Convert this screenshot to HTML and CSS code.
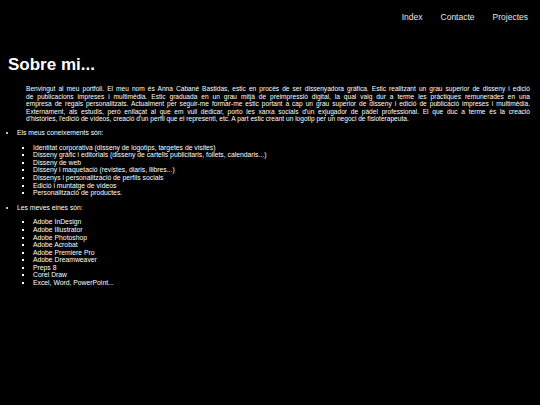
FILE: index.html
```html
<!DOCTYPE html>
<html lang="ca">
<head>
<meta charset="utf-8">
<title>Sobre mi</title>
<link rel="stylesheet" href="styles.css">
</head>
<body>
<nav class="nav">
  <a class="nav-link" href="#">Index</a>
  <a class="nav-link" href="#">Contacte</a>
  <a class="nav-link" href="#">Projectes</a>
</nav>
<main class="content">
  <h1 class="title">Sobre mi...</h1>
  <p class="intro"><span class="line">Benvingut al meu portfoli. El meu nom és Anna Cabané Bastidas, estic en procés de ser dissenyadora gràfica. Estic realitzant un grau superior de disseny i edició</span> <span class="line">de publicacions impreses i multimèdia. Estic graduada en un grau mitjà de preimpressió digital, la qual vaig dur a terme les pràctiques remunerades en una</span> <span class="line">empresa de regals personalitzats. Actualment per seguir-me formar-me estic portant a cap un grau superior de disseny i edició de publicació impreses i multimèdia.</span> <span class="line">Externament, als estudis, però enllaçat al que em vull dedicar, porto les xarxa socials d'un exjugador de pàdel professional. El que duc a terme és la creació</span> <span class="line last">d'històries, l'edició de vídeos, creació d'un perfil que el representi, etc. A part estic creant un logotip per un negoci de fisioterapeuta.</span></p>
  <ul class="outer">
    <li class="outer-item">Els meus coneixements són:
      <ul class="inner">
        <li>Identitat corporativa (disseny de logotips, targetes de visites)</li>
        <li>Disseny gràfic i editorials (disseny de cartells publicitaris, follets, calendaris...)</li>
        <li>Disseny de web</li>
        <li>Disseny i maquetació (revistes, diaris, llibres...)</li>
        <li>Dissenys i personalització de perfils socials</li>
        <li>Edició i muntatge de vídeos</li>
        <li>Personalització de productes.</li>
      </ul>
    </li>
    <li class="outer-item">Les meves eines són:
      <ul class="inner">
        <li>Adobe InDesign</li>
        <li>Adobe Illustrator</li>
        <li>Adobe Photoshop</li>
        <li>Adobe Acrobat</li>
        <li>Adobe Premiere Pro</li>
        <li>Adobe Dreamweaver</li>
        <li>Preps 8</li>
        <li>Corel Draw</li>
        <li>Excel, Word, PowerPoint...</li>
      </ul>
    </li>
  </ul>
</main>
</body>
</html>
```
FILE: styles.css
```css
html, body {
  background: #000;
}
body {
  margin: 0;
  color: #fff;
  font-family: "Liberation Sans", Arial, sans-serif;
}
.nav {
  display: flex;
  justify-content: flex-end;
  gap: 18px;
  padding: 12px 12px 0 0;
  height: 20px;
}
.nav-link {
  color: #e6e6e6;
  text-decoration: none;
  font-size: 8.5px;
  line-height: 10px;
}
.content {
  padding: 0 10px 0 8px;
}
.title {
  margin: 23px 0 0 0;
  font-size: 17px;
  line-height: 20px;
  font-weight: bold;
}
.intro {
  margin: 10px 0 0 18px;
  font-size: 6.6px;
  line-height: 7.6px;
}
.line {
  display: block;
  white-space: nowrap;
  text-align: justify;
  text-align-last: justify;
}
.line.last {
  text-align-last: left;
}
.outer {
  margin: 6px 0 0 0;
  padding: 0 0 0 9px;
  font-size: 6.8px;
  line-height: 7.6px;
}
.outer-item {
  margin-bottom: 7px;
}
.inner {
  margin: 7px 0 0 0;
  padding: 0 0 0 16px;
  list-style: square;
}
```
